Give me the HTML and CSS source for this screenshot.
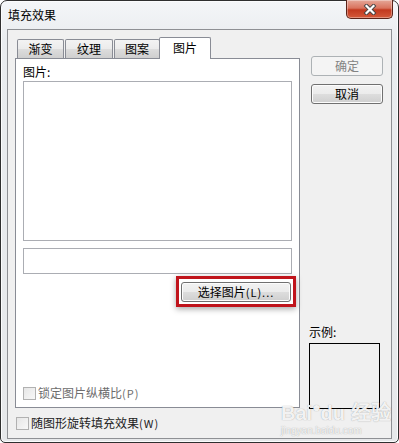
FILE: index.html
```html
<!DOCTYPE html>
<html lang="zh-CN">
<head>
<meta charset="utf-8">
<title>填充效果</title>
<link rel="stylesheet" href="styles.css">
</head>
<body>
<div class="window">
  <div class="titlebar">
    <span class="title">填充效果</span>
    <div class="close">
      <svg width="16" height="11" viewBox="0 0 16 11">
        <path d="M4.5 2 L11.5 9 M11.5 2 L4.5 9" stroke="#444" stroke-width="4" stroke-linecap="square" fill="none"/>
        <path d="M4.5 2 L11.5 9 M11.5 2 L4.5 9" stroke="#ffffff" stroke-width="2.2" stroke-linecap="square" fill="none"/>
      </svg>
    </div>
  </div>
  <div class="client">
    <div class="main">
      <div class="left">
        <div class="tabs">
          <div class="tab t1">渐变</div>
          <div class="tab t2">纹理</div>
          <div class="tab t3">图案</div>
          <div class="tab sel">图片</div>
        </div>
        <div class="panel">
          <div class="label">图片:</div>
          <div class="listbox"></div>
          <div class="textbox"></div>
          <div class="hl-row">
            <div class="highlight">
              <div class="btn wide">选择图片<span class="acc">(L)...</span></div>
            </div>
          </div>
          <label class="check disabled inner"><span class="box"></span>锁定图片纵横比<span class="acc">(P)</span></label>
        </div>
      </div>
      <div class="right">
        <div class="btn disabled-btn">确定</div>
        <div class="btn">取消</div>
        <div class="preview">
          <div class="label">示例:</div>
          <div class="sample"></div>
        </div>
      </div>
    </div>
    <label class="check outer"><span class="box"></span>随图形旋转填充效果<span class="acc">(W)</span></label>
  </div>
  <div class="watermark">
    <div class="wm1">Bai<span class="paw">●</span>du 经验</div>
    <div class="wm2">jingyan.baidu.com</div>
  </div>
</div>
</body>
</html>
```
FILE: styles.css
```css
* { box-sizing: border-box; }
html, body { margin: 0; padding: 0; background: #ffffff; }
body {
  font-family: "Noto Sans CJK SC", "Noto Sans", sans-serif;
  font-size: 12px;
  color: #000;
}
.window {
  position: relative;
  width: 399px;
  height: 443px;
  border: 1px solid #2f2f2f;
  border-radius: 7px 7px 5px 5px;
  background: linear-gradient(#f4f6f8, #e9ecef 40px, #e6e8ea);
  display: flex;
  flex-direction: column;
  padding: 0 6px 3px 6px;
  box-shadow: inset 0 0 0 1px #fbfcfd;
}
.titlebar {
  height: 28px;
  display: flex;
  align-items: flex-start;
  position: relative;
}
.title {
  margin-top: 6px;
  margin-left: 1px;
  line-height: 16px;
  font-size: 12px;
  color: #000;
}
.close {
  position: absolute;
  right: -1px;
  top: -1px;
  width: 47px;
  height: 19px;
  border: 1px solid #5b2419;
  border-top: none;
  border-radius: 0 0 5px 5px;
  background: linear-gradient(#e5a899 0%, #d9735e 45%, #c2391f 55%, #d45a3a 100%);
  box-shadow: inset 0 0 0 1px rgba(255,255,255,0.35);
  display: flex;
  align-items: center;
  justify-content: center;
}
.client {
  flex: 1;
  background: #f0f0f0;
  border: 1px solid #8e9094;
  display: flex;
  flex-direction: column;
  padding: 7px 0 0 7px;
}
.main {
  display: flex;
  gap: 11px;
}
.left {
  width: 285px;
  display: flex;
  flex-direction: column;
}
.tabs {
  display: flex;
  height: 21px;
  align-items: flex-end;
  padding-left: 2px;
  position: relative;
  z-index: 1;
}
.tab {
  height: 19px;
  border: 1px solid #898c95;
  border-bottom: none;
  border-radius: 2px 2px 0 0;
  background: linear-gradient(#f3f3f3, #ebebeb 50%, #dddddd 51%, #cfcfcf);
  line-height: 18px;
  text-align: center;
}
.t1 { width: 47px; margin-right: 1px; }
.t2 { width: 48px; margin-right: 1px; }
.t3 { width: 46px; }
.tab.sel {
  width: 52px;
  height: 22px;
  margin-left: -1px;
  margin-bottom: -1px;
  background: #ffffff;
  line-height: 19px;
}
.panel {
  height: 350px;
  background: #ffffff;
  border: 1px solid #898c95;
  display: flex;
  flex-direction: column;
  padding: 5px 7px 6px 7px;
}
.label {
  line-height: 16px;
  height: 16px;
}
.listbox {
  margin-top: 1px;
  height: 160px;
  border: 1px solid #abadb3;
  background: #fff;
}
.textbox {
  margin-top: 7px;
  height: 26px;
  border: 1px solid #abadb3;
  background: #fff;
}
.hl-row {
  display: flex;
  justify-content: flex-end;
  margin-top: 2px;
  margin-right: -4px;
}
.highlight {
  border: 3px solid #c0141c;
  padding: 3px 2px 2px 2px;
  box-shadow: 0 2px 6px rgba(0,0,0,0.35);
}
.btn {
  width: 72px;
  height: 20px;
  border: 1px solid #707070;
  border-radius: 3px;
  background: linear-gradient(#f2f2f2, #ebebeb 50%, #dddddd 51%, #cfcfcf);
  box-shadow: inset 0 0 0 1px #fcfcfc;
  text-align: center;
  line-height: 17px;
  color: #000;
}
.btn.wide { width: 110px; }
.acc { font-size: 11px; letter-spacing: 1px; }
.right {
  width: 72px;
  display: flex;
  flex-direction: column;
  padding-top: 19px;
  gap: 8px;
}
.disabled-btn {
  border-color: #adb2b5;
  background: #f4f4f4;
  color: #838383;
  box-shadow: none;
}
.preview {
  margin-top: auto;
  margin-bottom: -1px;
  display: flex;
  flex-direction: column;
  margin-left: -2px;
}
.preview .label { margin-bottom: 3px; }
.sample {
  width: 71px;
  height: 66px;
  border: 1px solid #000;
  background: #f0f0f0;
}
.check {
  display: flex;
  align-items: center;
  line-height: 16px;
}
.box {
  width: 13px;
  height: 13px;
  border: 1px solid #b1b1b1;
  background: linear-gradient(135deg, #e6e6e6, #f8f8f8);
  margin-right: 2px;
  flex: none;
}
.check.inner {
  margin-top: auto;
  color: #6d6d6d;
}
.check.outer {
  margin-top: 7px;
  margin-left: 1px;
  color: #222;
}
.watermark {
  position: absolute;
  left: 280px;
  top: 382px;
  color: rgba(255,255,255,0.9);
  text-shadow: 0 0 1px rgba(110,110,110,0.7);
  pointer-events: none;
  font-family: "Liberation Sans", sans-serif;
}
.wm1 { font-size: 20px; font-weight: bold; line-height: 24px; margin-top: 12px; }
.wm1 .paw { font-size: 14px; vertical-align: 8px; }
.wm2 { font-size: 10px; line-height: 12px; }
```
